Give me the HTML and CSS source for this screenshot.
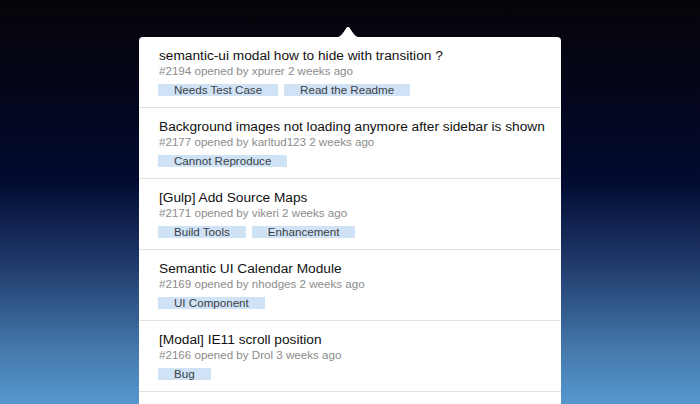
FILE: index.html
```html
<!DOCTYPE html>
<html lang="en">
<head>
    <meta charset="UTF-8">
    <meta name="viewport" content="width=device-width, initial-scale=1.0">
    <title>Issues</title>
    <link rel="stylesheet" href="styles.css">
</head>
<body>

<div id="popover">
    <svg class="arrow" width="30" height="12" viewBox="0 0 30 12">
        <path d="M0 12 C6 12 9 9 12 4 C13.5 1.5 14 1 15 1 C16 1 16.5 1.5 18 4 C21 9 24 12 30 12 Z" fill="#ffffff"/>
    </svg>

    <div class="issue">
        <div class="title">semantic-ui modal how to hide with transition ?</div>
        <div class="meta">#2194 opened by xpurer 2 weeks ago</div>
        <div class="tags">
            <span class="tag">Needs Test Case</span>
            <span class="tag">Read the Readme</span>
        </div>
    </div>

    <div class="issue">
        <div class="title">Background images not loading anymore after sidebar is shown</div>
        <div class="meta">#2177 opened by karltud123 2 weeks ago</div>
        <div class="tags">
            <span class="tag">Cannot Reproduce</span>
        </div>
    </div>

    <div class="issue">
        <div class="title">[Gulp] Add Source Maps</div>
        <div class="meta">#2171 opened by vikeri 2 weeks ago</div>
        <div class="tags">
            <span class="tag">Build Tools</span>
            <span class="tag">Enhancement</span>
        </div>
    </div>

    <div class="issue">
        <div class="title">Semantic UI Calendar Module</div>
        <div class="meta">#2169 opened by nhodges 2 weeks ago</div>
        <div class="tags">
            <span class="tag">UI Component</span>
        </div>
    </div>

    <div class="issue">
        <div class="title">[Modal] IE11 scroll position</div>
        <div class="meta">#2166 opened by Drol 3 weeks ago</div>
        <div class="tags">
            <span class="tag">Bug</span>
        </div>
    </div>
</div>

</body>
</html>
```

FILE: styles.css
```css
:root {
    --panel-background: #ffffff;
    --divider: #e2e2e2;
    --title-text: #111111;
    --meta-text: #8c8c8c;
    --tag-background: #cfe2f6; /* pale blue label */
    --tag-text: #3b3f45;
}

html, body {
    margin: 0;
    height: 404px;
    overflow: hidden;
}

body {
    box-sizing: border-box;
    font-family: "Liberation Sans", Arial, sans-serif;
    background: linear-gradient(to bottom,
        #050508 0px,
        #04061a 90px,
        #020b30 180px,
        #1a3162 250px,
        #2e5485 300px,
        #4679ac 350px,
        #5597cf 404px);
    padding-top: 37px;
}

#popover {
    position: relative;
    width: 422px;
    height: 367px;
    margin: 0 auto;
    background-color: var(--panel-background);
    border-radius: 4px 4px 0 0;
}

.arrow {
    position: absolute;
    top: -11px;
    left: 194px;
    display: block;
}

.issue {
    padding: 11px 19px 11px;
    border-bottom: 1px solid var(--divider);
}

.title {
    font-size: 13.7px;
    line-height: 16px;
    color: var(--title-text);
    margin-left: 1px;
    white-space: nowrap;
}

.meta {
    font-size: 11.6px;
    line-height: 14px;
    color: var(--meta-text);
    margin-left: 1px;
}

.tags {
    display: flex;
    gap: 6px;
    margin-top: 6px;
}

.tag {
    display: inline-block;
    background-color: var(--tag-background);
    color: var(--tag-text);
    font-size: 11.6px;
    line-height: 12px;
    height: 12px;
    padding: 0 16px;
}
```
